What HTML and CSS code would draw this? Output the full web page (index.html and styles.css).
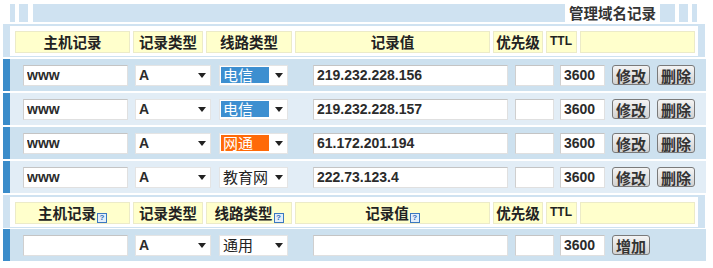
FILE: index.html
```html
<!DOCTYPE html>
<html lang="zh-CN">
<head>
    <meta charset="UTF-8">
    <title>管理域名记录</title>
    <link rel="stylesheet" href="styles.css">
</head>
<body>
    <div class="panel">
        <!-- 标题栏 -->
        <div class="titlebar">
            <span class="blk w5 ml10"></span>
            <span class="blk w9 ml4"></span>
            <span class="bar"></span>
            <span class="title">管理域名记录</span>
            <span class="blk w15"></span>
            <span class="blk w9 ml4"></span>
            <span class="blk w5 ml4"></span>
        </div>

        <!-- 表头 -->
        <div class="head">
            <div class="head-inner">
                <div class="cell c-host">主机记录</div>
                <div class="cell c-type">记录类型</div>
                <div class="cell c-line">线路类型</div>
                <div class="cell c-value">记录值</div>
                <div class="cell c-prio">优先级</div>
                <div class="cell c-ttl ttl">TTL</div>
                <div class="cell c-act"></div>
            </div>
        </div>

        <!-- 记录列表 -->
        <div class="row dark">
            <input class="field f-host" type="text" value="www">
            <div class="select s-type"><span>A</span><i class="arrow"></i></div>
            <div class="select s-line"><span class="opt blue">电信</span><i class="arrow"></i></div>
            <input class="field f-value" type="text" value="219.232.228.156">
            <input class="field f-prio" type="text" value="">
            <input class="field f-ttl" type="text" value="3600">
            <button class="btn">修改</button>
            <button class="btn">删除</button>
        </div>
        <div class="row light">
            <input class="field f-host" type="text" value="www">
            <div class="select s-type"><span>A</span><i class="arrow"></i></div>
            <div class="select s-line"><span class="opt blue">电信</span><i class="arrow"></i></div>
            <input class="field f-value" type="text" value="219.232.228.157">
            <input class="field f-prio" type="text" value="">
            <input class="field f-ttl" type="text" value="3600">
            <button class="btn">修改</button>
            <button class="btn">删除</button>
        </div>
        <div class="row dark">
            <input class="field f-host" type="text" value="www">
            <div class="select s-type"><span>A</span><i class="arrow"></i></div>
            <div class="select s-line"><span class="opt orange">网通</span><i class="arrow"></i></div>
            <input class="field f-value" type="text" value="61.172.201.194">
            <input class="field f-prio" type="text" value="">
            <input class="field f-ttl" type="text" value="3600">
            <button class="btn">修改</button>
            <button class="btn">删除</button>
        </div>
        <div class="row light">
            <input class="field f-host" type="text" value="www">
            <div class="select s-type"><span>A</span><i class="arrow"></i></div>
            <div class="select s-line"><span class="opt">教育网</span><i class="arrow"></i></div>
            <input class="field f-value" type="text" value="222.73.123.4">
            <input class="field f-prio" type="text" value="">
            <input class="field f-ttl" type="text" value="3600">
            <button class="btn">修改</button>
            <button class="btn">删除</button>
        </div>

        <!-- 新增记录 -->
        <div class="head second">
            <div class="head-inner">
                <div class="cell c-host">主机记录<span class="help">?</span></div>
                <div class="cell c-type">记录类型</div>
                <div class="cell c-line">线路类型<span class="help">?</span></div>
                <div class="cell c-value">记录值<span class="help">?</span></div>
                <div class="cell c-prio">优先级</div>
                <div class="cell c-ttl ttl">TTL</div>
                <div class="cell c-act"></div>
            </div>
        </div>
        <div class="row dark add">
            <input class="field f-host" type="text" value="">
            <div class="select s-type"><span>A</span><i class="arrow"></i></div>
            <div class="select s-line"><span class="opt">通用</span><i class="arrow"></i></div>
            <input class="field f-value" type="text" value="">
            <input class="field f-prio" type="text" value="">
            <input class="field f-ttl" type="text" value="3600">
            <button class="btn">增加</button>
        </div>
    </div>
</body>
</html>
```

FILE: styles.css
```css
/* 颜色 */
:root {
    --azul-claro: #cfe2f1;
    --azul-linha: #cde1ef;
    --azul-linha2: #e2edf6;
    --azul-marca: #3b8cca;
    --amarelo: #ffffcc;
    --texto: #2b2b2b;
}

body {
    margin: 0;
    background: #ffffff;
    font-family: "Liberation Sans", "Noto Sans CJK SC", sans-serif;
    color: var(--texto);
}

.panel {
    width: 713px;
}

/* --- 标题栏 --- */
.titlebar {
    display: flex;
    align-items: center;
    height: 18px;
    margin-top: 4px;
}

.blk {
    height: 18px;
    background: var(--azul-claro);
}

.w5 { width: 5px; }
.w9 { width: 9px; }
.w15 { width: 15px; }
.ml10 { margin-left: 10px; }
.ml4 { margin-left: 4px; }

.bar {
    height: 18px;
    width: 532px;
    margin-left: 5px;
    background: var(--azul-claro);
}

.title {
    width: 95px;
    text-align: center;
    font-family: "Noto Sans CJK SC", sans-serif;
    font-weight: 700;
    font-size: 14.5px;
    line-height: 18px;
    color: #333;
}

/* --- 表头 --- */
.head {
    margin: 2px 0 0 3px;
    width: 702px;
    box-sizing: border-box;
    padding: 2px 7px 1px 7px;
    background: var(--azul-claro);
}

.head.second {
    margin-top: 2px;
}

.head-inner {
    display: flex;
    gap: 3px;
    background: #ffffff;
    padding: 5px 3px 3px 5px;
}

.cell {
    height: 22px;
    box-sizing: border-box;
    background: var(--amarelo);
    border: 1px solid #ecebc8;
    font-family: "Noto Sans CJK SC", sans-serif;
    font-weight: 700;
    font-size: 14.5px;
    line-height: 19px;
    text-align: center;
    color: #222;
    white-space: nowrap;
}

.c-host { width: 115px; }
.c-type { width: 70px; }
.c-line { width: 86px; }
.c-value { width: 195px; }
.c-prio { width: 50px; }
.c-ttl { width: 31px; }
.c-act { width: 115px; }

.ttl {
    font-family: "Liberation Sans", sans-serif;
    font-size: 12px;
    text-align: left;
    padding-left: 3px;
}

.help {
    display: inline-block;
    width: 8px;
    height: 8px;
    margin-left: 1px;
    border: 1px solid #3a78c0;
    background: #e3eefa;
    color: #2d6cb8;
    font-family: "Liberation Sans", sans-serif;
    font-size: 8px;
    font-weight: 700;
    line-height: 8px;
    text-align: center;
    vertical-align: -1px;
}

/* --- 记录行 --- */
.row {
    display: flex;
    align-items: center;
    margin: 2px 0 0 3px;
    width: 703px;
    height: 32px;
    box-sizing: border-box;
    padding-left: 13px;
    border-left: 7px solid var(--azul-marca);
}

.row.dark { background: var(--azul-linha); }
.row.light { background: var(--azul-linha2); }
.row.add { margin-top: 1px; }

.field {
    height: 21px;
    box-sizing: border-box;
    margin: 0;
    padding: 0 3px;
    border: 1px solid #e0e0e0;
    border-top-color: #c4c4c4;
    border-left-color: #cfcfcf;
    background: #ffffff;
    font-family: "Liberation Sans", sans-serif;
    font-weight: 700;
    font-size: 14px;
    color: var(--texto);
    outline: none;
}

.f-host { width: 105px; }
.f-value { width: 195px; margin-left: 25px; }
.f-prio { width: 39px; margin-left: 7px; }
.f-ttl { width: 45px; margin-left: 6px; }

.select {
    display: flex;
    align-items: center;
    justify-content: space-between;
    height: 21px;
    box-sizing: border-box;
    border: 1px solid #e4e4e4;
    background: #ffffff;
    font-family: "Liberation Sans", sans-serif;
    font-weight: 700;
    font-size: 14px;
}

.s-type {
    width: 76px;
    margin-left: 7px;
    padding: 0 4px 0 3px;
}

.s-line {
    width: 69px;
    margin-left: 8px;
    padding: 0 4px 0 1px;
}

.arrow {
    width: 0;
    height: 0;
    border-left: 4px solid transparent;
    border-right: 4px solid transparent;
    border-top: 5px solid #222;
}

.opt {
    display: inline-block;
    width: 48px;
    height: 16px;
    padding-left: 2px;
    box-sizing: border-box;
    font-family: "Noto Sans CJK SC", sans-serif;
    font-weight: 400;
    font-size: 15px;
    line-height: 16px;
    color: #222;
    white-space: nowrap;
}

.opt.blue {
    background: #3d8fd0;
    color: #ffffff;
}

.opt.orange {
    background: #ff6a08;
    color: #ffffff;
}

.btn {
    width: 38px;
    height: 20px;
    margin-left: 7px;
    padding: 0;
    box-sizing: border-box;
    border: 1px solid #7a7a7a;
    border-radius: 3px;
    background: linear-gradient(#f4f4f4, #d2d2d2);
    font-family: "Noto Sans CJK SC", sans-serif;
    font-weight: 700;
    font-size: 15px;
    line-height: 17px;
    color: #333;
}

.btn + .btn {
    margin-left: 7px;
}
```
